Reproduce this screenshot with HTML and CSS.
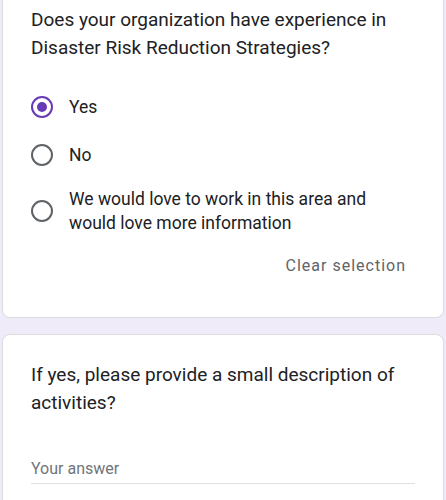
FILE: index.html
```html
<!DOCTYPE html>
<html lang="en">
<head>
  <meta charset="UTF-8" />
  <meta name="viewport" content="width=device-width, initial-scale=1.0"/>
  <title>Disaster Risk Reduction Survey</title>
  <link rel="stylesheet" href="styles.css">
</head>
<body>
  <div class="card card-first">
    <div class="question">Does your organization have experience in Disaster Risk Reduction Strategies?</div>

    <div class="options">
      <label class="option">
        <input type="radio" name="drr" value="Yes" checked />
        <span class="option-text">Yes</span>
      </label>
      <label class="option">
        <input type="radio" name="drr" value="No" />
        <span class="option-text">No</span>
      </label>
      <label class="option option-multi">
        <input type="radio" name="drr" value="More info" />
        <span class="option-text">We would love to work in this area and would love more information</span>
      </label>
    </div>

    <div class="clear-row">
      <span class="clear-btn">Clear selection</span>
    </div>
  </div>

  <div class="card">
    <div class="question">If yes, please provide a small description of activities?</div>
    <input class="answer" type="text" placeholder="Your answer" />
  </div>
</body>
</html>
```

FILE: styles.css
```css
body {
  margin: 0;
  padding: 0 2px;
  background-color: #f0ebf8;
  font-family: Roboto, "Noto Sans", sans-serif;
  color: #202124;
}
.card {
  background-color: #fff;
  border: 1px solid #dadce0;
  border-radius: 8px;
  padding: 26px 28px 24px;
  margin-bottom: 16px;
}
.card-first {
  border-top: none;
  border-radius: 0 0 8px 8px;
  padding-top: 6px;
  padding-bottom: 39px;
}
.question {
  font-size: 19px;
  line-height: 28px;
}
.options {
  margin-top: 21px;
  display: flex;
  flex-direction: column;
}
.option {
  display: flex;
  align-items: center;
  gap: 16px;
  padding: 12px 0;
  font-size: 17.5px;
  line-height: 24px;
}
.option-multi {
  padding-top: 8px;
}
.option input {
  appearance: none;
  -webkit-appearance: none;
  flex: none;
  width: 22px;
  height: 22px;
  margin: 0;
  border: 2px solid #5f6368;
  border-radius: 50%;
  display: flex;
  align-items: center;
  justify-content: center;
}
.option input:checked {
  border-color: #673ab7;
}
.option input:checked::after {
  content: "";
  width: 10px;
  height: 10px;
  border-radius: 50%;
  background-color: #673ab7;
}
.clear-row {
  display: flex;
  justify-content: flex-end;
  margin-top: 7px;
  padding-right: 9px;
}
.clear-btn {
  font-size: 16px;
  line-height: 24px;
  letter-spacing: 1px;
  color: #5f6368;
}
.answer {
  display: block;
  width: 100%;
  box-sizing: border-box;
  margin-top: 40px;
  padding: 0 0 2px;
  border: none;
  border-bottom: 1px solid #e0e0e0;
  font-family: Roboto, "Noto Sans", sans-serif;
  font-size: 16px;
  line-height: 24px;
  color: #202124;
  outline: none;
}
.answer::placeholder {
  color: #70757a;
}
```
